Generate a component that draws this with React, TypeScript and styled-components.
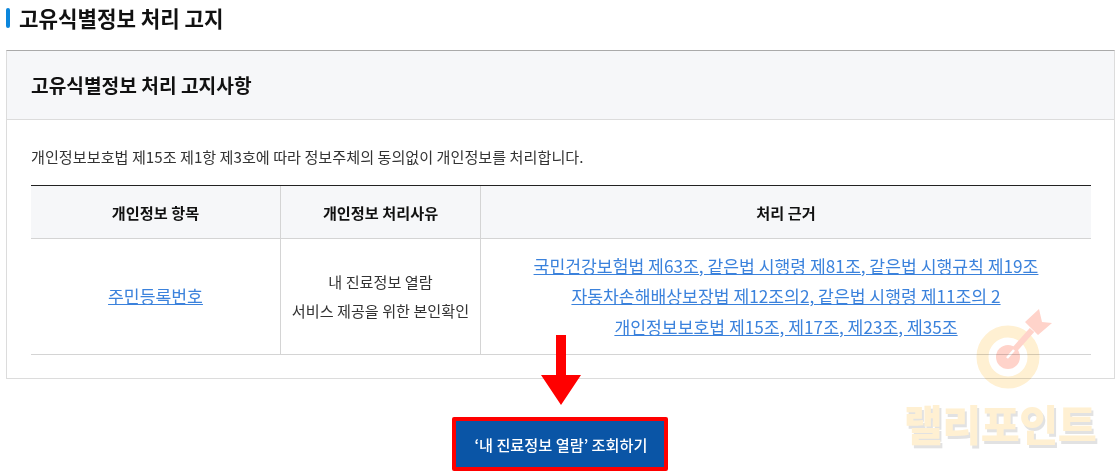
import React from 'react'
import styled, { createGlobalStyle } from 'styled-components'

const GlobalStyle = createGlobalStyle`
	html, body {
		margin: 0;
		padding: 0;
		background: #fff;
		font-family: 'Noto Sans CJK KR', 'Noto Sans', sans-serif;
		color: #222;
	}
`

const Page = styled.div`
	position: relative;
	width: 1120px;
	height: 474px;
	overflow: hidden;
	padding: 0 5px 0 6px;
	box-sizing: border-box;
`

const Title = styled.h2`
	margin: 0;
	height: 50px;
	padding: 3px 0 0 13px;
	box-sizing: border-box;
	position: relative;
	font-size: 21.2px;
	line-height: 30px;
	font-weight: 700;
	color: #111;

	&::before {
		content: '';
		position: absolute;
		left: 0;
		top: 8px;
		width: 4px;
		height: 20px;
		border-radius: 2px;
		background: #0b86dc;
	}
`

const Card = styled.section`
	border: 1px solid #dcdcdc;
	border-top-color: #aaa;
	height: 329px;
	box-sizing: border-box;
`

const CardHeader = styled.div`
	height: 68px;
	padding-left: 24px;
	display: flex;
	align-items: center;
	background: #f6f7f9;
	border-bottom: 1px solid #dcdcdc;
	font-size: 19.2px;
	font-weight: 700;
	color: #111;
`

const CardBody = styled.div`
	padding: 24px 23px 0 24px;
`

const Notice = styled.p`
	margin: 0 0 17px;
	font-size: 15.15px;
	line-height: 24px;
	color: #333;
`

const Table = styled.div`
	display: grid;
	grid-template-columns: 250px 200px 1fr;
	border-top: 1px solid #222;
`

const HeadCell = styled.div<{ $last?: boolean }>`
	height: 52px;
	display: flex;
	align-items: center;
	justify-content: center;
	background: #f6f7f9;
	border-bottom: 1px solid #d4d4d4;
	border-right: ${p => (p.$last ? 'none' : '1px solid #d4d4d4')};
	font-size: 15.2px;
	font-weight: 700;
	color: #111;
`

const BodyCell = styled.div<{ $last?: boolean }>`
	height: 116px;
	box-sizing: border-box;
	display: flex;
	flex-direction: column;
	align-items: center;
	justify-content: center;
	border-bottom: 1px solid #d4d4d4;
	border-right: ${p => (p.$last ? 'none' : '1px solid #d4d4d4')};
	text-align: center;
`

const ReasonCell = styled(BodyCell)`
	padding-bottom: 2px;
`

const Reason = styled.div`
	font-size: 15.15px;
	line-height: 29px;
	color: #333;
`

const TableLink = styled.a`
	font-size: 17.2px;
	line-height: 30.5px;
	color: #3b82dc;
	text-decoration: underline;
`

const Action = styled.div`
	display: flex;
	flex-direction: column;
	align-items: center;
	margin: -44px 2px 0 0;
	position: relative;
`

const ArrowIcon = styled.svg`
	display: block;
	width: 40px;
	height: 70px;
	margin: 0 0 12px 3px;
`

const Button = styled.button`
	width: 216px;
	height: 54px;
	box-sizing: border-box;
	border: 4px solid #ff0000;
	border-radius: 2px;
	background: #0a55a6;
	color: #fff;
	font-family: inherit;
	font-size: 15.2px;
	font-weight: 500;
	padding: 0 0 0 3px;
`

const Watermark = styled.div`
	position: absolute;
	left: 902px;
	top: 306px;
	width: 196px;
	display: flex;
	flex-direction: column;
	align-items: center;
	pointer-events: none;
	mix-blend-mode: multiply;
`

const WatermarkIcon = styled.svg`
	display: block;
	width: 90px;
	height: 84px;
	margin-left: 34px;
`

const WatermarkText = styled.div`
	margin-top: 10px;
	font-size: 42.4px;
	line-height: 46px;
	font-weight: 900;
	letter-spacing: -0.5px;
	white-space: nowrap;
	color: #fff0d2;
	text-shadow: 2px 3px 0 #e2e2e2;
`

const lawLinks = [
	'국민건강보험법 제63조, 같은법 시행령 제81조, 같은법 시행규칙 제19조',
	'자동차손해배상보장법 제12조의2, 같은법 시행령 제11조의 2',
	'개인정보보호법 제15조, 제17조, 제23조, 제35조',
]

const App = () => {
	return (
		<Page>
			<GlobalStyle />
			<Title>고유식별정보 처리 고지</Title>
			<Card>
				<CardHeader>고유식별정보 처리 고지사항</CardHeader>
				<CardBody>
					<Notice>개인정보보호법 제15조 제1항 제3호에 따라 정보주체의 동의없이 개인정보를 처리합니다.</Notice>
					<Table>
						<HeadCell>개인정보 항목</HeadCell>
						<HeadCell>개인정보 처리사유</HeadCell>
						<HeadCell $last>처리 근거</HeadCell>
						<BodyCell>
							<TableLink href="#">주민등록번호</TableLink>
						</BodyCell>
						<ReasonCell>
							<Reason>내 진료정보 열람</Reason>
							<Reason>서비스 제공을 위한 본인확인</Reason>
						</ReasonCell>
						<BodyCell $last>
							{lawLinks.map(law => (
								<TableLink href="#" key={law}>{law}</TableLink>
							))}
						</BodyCell>
					</Table>
				</CardBody>
			</Card>
			<Action>
				<ArrowIcon viewBox="0 0 40 70">
					<path d="M15 0h10v40h15L20 70 0 40h15z" fill="#ff0000" />
				</ArrowIcon>
				<Button>‘내 진료정보 열람’ 조회하기</Button>
			</Action>
			<Watermark>
				<WatermarkIcon viewBox="0 0 90 84">
					<circle cx="36" cy="51" r="25.5" fill="none" stroke="#fff0d2" strokeWidth="12" />
					<circle cx="36" cy="51" r="12" fill="#ffd3ca" />
					<path d="M36 51L60 24" stroke="#ffd3ca" strokeWidth="6" />
					<path d="M35 52L42 44" stroke="#fff" strokeWidth="2.5" />
					<path d="M67 3l3 13 10 1-14 12-13-13z" fill="#ffd3ca" />
				</WatermarkIcon>
				<WatermarkText>랠리포인트</WatermarkText>
			</Watermark>
		</Page>
	)
}

export default App
